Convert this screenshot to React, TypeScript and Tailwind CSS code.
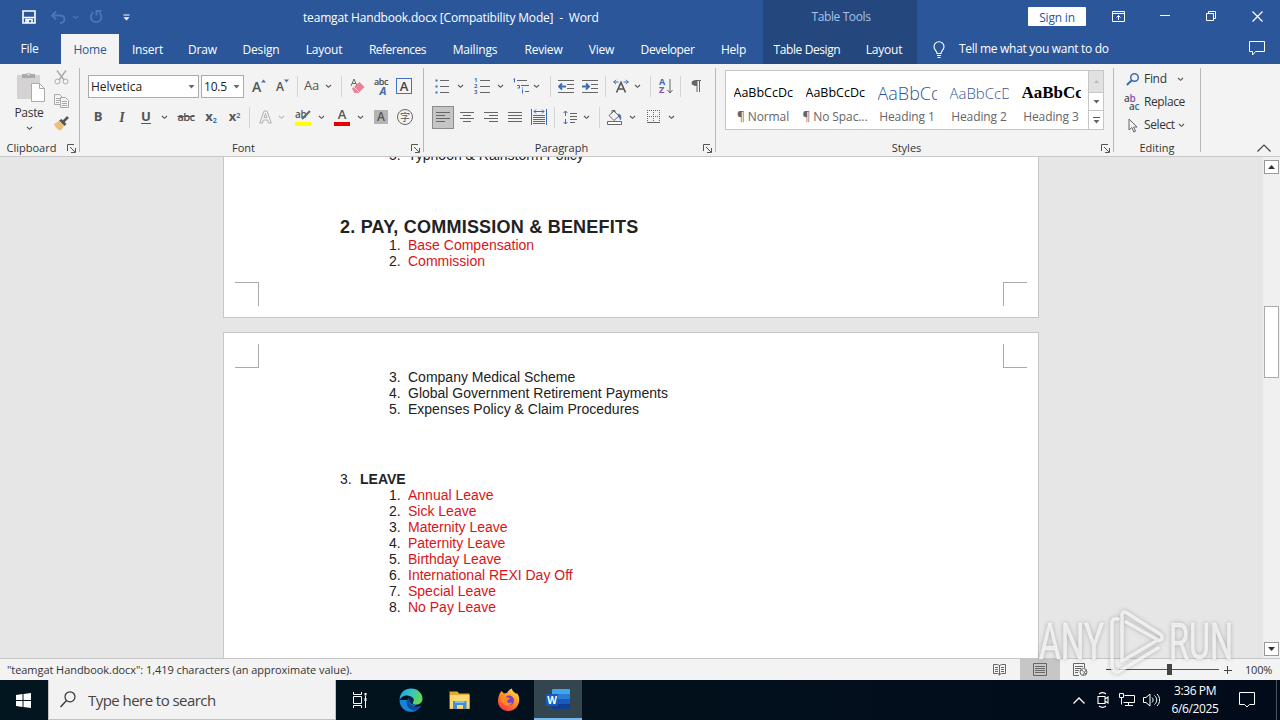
import React from "react";
import clsx from "clsx";

const Chevron = ({ className = "", color = "#555" }: { className?: string; color?: string }) => (
  <svg width="7" height="5" viewBox="0 0 7 5" className={clsx("shrink-0", className)}>
    <path d="M1 1l2.5 2.3L6 1" fill="none" stroke={color} strokeWidth="1.1" />
  </svg>
);

const Caret = ({ className = "" }: { className?: string }) => (
  <svg width="7" height="4" viewBox="0 0 7 4" className={clsx("shrink-0", className)}>
    <path d="M0.5 0h6L3.5 3.6z" fill="#666" />
  </svg>
);

const Sep = ({ className = "" }: { className?: string }) => (
  <div className={clsx("w-px h-[21px] shrink-0 bg-[#d4d4d4]", className)} />
);

const Launcher = () => (
  <svg width="9" height="9" viewBox="0 0 9 9" className="shrink-0" fill="none" stroke="#555">
    <path d="M0.5 7V0.5H7M3 3l5 5M8.5 4v4.5H4" />
  </svg>
);

type IconProps = { w: number; h: number; className?: string; children: React.ReactNode };

const Icon = ({ w, h, className = "", children }: IconProps) => (
  <svg
    width={w}
    height={h}
    viewBox={`0 0 ${w} ${h}`}
    className={clsx("shrink-0", className)}
    fill="none"
    stroke="#666"
  >
    {children}
  </svg>
);

const tabs = [
  { name: "File", cls: "w-[59px] pb-[2px]" },
  { name: "Home", cls: "w-[58px] ml-[2px] bg-[#f3f3f3] text-[#2b579a]" },
  { name: "Insert", cls: "w-[57px]" },
  { name: "Draw", cls: "w-[53px]" },
  { name: "Design", cls: "w-[64px]" },
  { name: "Layout", cls: "w-[62px]" },
  { name: "References", cls: "w-[85px] -tracking-[0.5px]" },
  { name: "Mailings", cls: "w-[70px]" },
  { name: "Review", cls: "w-[67px]" },
  { name: "View", cls: "w-[49px]" },
  { name: "Developer", cls: "w-[83px] -tracking-[0.4px]" },
  { name: "Help", cls: "w-[49px]" },
];

const Header = () => (
  <header className="flex h-[64px] bg-[#2b579a] text-white">
    <div className="w-[763px] flex flex-col">
      <div className="h-[34px] flex items-center">
        <Icon w={14} h={14} className="ml-[22px]">
          <path d="M1 1h12v12H1z" stroke="#fff" strokeWidth="1.6" />
          <path d="M1 7.5h12M4 13V9.500h6V13" stroke="#fff" strokeWidth="1.6" />
          <path d="M5 10h2v3H5z" fill="#fff" stroke="none" />
        </Icon>
        <Icon w={15} h={13} className="ml-[15px]">
          <path d="M5 0.500L1 4.500L5 8.500M1 4.500h8c6 0 6 7.500 0 7.500" stroke="#5075b2" strokeWidth="1.8" />
        </Icon>
        <Chevron className="ml-[6px]" color="#5075b2" />
        <Icon w={14} h={14} className="ml-[10px]">
          <path d="M4.500 2.200a5.300 5.300 0 1 0 6 0.500M7.500 5.500V1h5" stroke="#5075b2" strokeWidth="1.8" />
        </Icon>
        <Icon w={7} h={7} className="ml-[20px]">
          <path d="M0.500 1h6" stroke="#fff" />
          <path d="M0.500 3.200h6L3.500 6.500z" fill="#fff" stroke="none" />
        </Icon>
        <div className="ml-[173px] mt-[2px] text-[12px] whitespace-pre -tracking-[0.17px]">
          teamgat Handbook.docx [Compatibility Mode]  -  Word
        </div>
      </div>
      <nav className="h-[30px] flex">
        {tabs.map((t) => (
          <div key={t.name} className={clsx("flex items-center justify-center text-[12px] pt-[2px]", !t.cls.includes("tracking") && "-tracking-[0.2px]", t.cls)}>
            {t.name}
          </div>
        ))}
      </nav>
    </div>
    <div className="w-[154px] bg-[#24477d] flex flex-col">
      <div className="h-[34px] flex items-center justify-center text-[12px] text-[#a9c1e8] -tracking-[0.4px] pl-[2px]">
        Table Tools
      </div>
      <div className="h-[30px] flex items-center text-[12px] pt-[2px]">
        <span className="w-[89px] text-center whitespace-nowrap -tracking-[0.4px]">Table Design</span>
        <span className="w-[67px] text-center -tracking-[0.2px]">Layout</span>
      </div>
    </div>
    <div className="flex-1 flex flex-col">
      <div className="h-[32px] flex items-center">
        <div className="ml-[111px] w-[58px] h-[19px] pt-[2px] bg-white rounded-[1px] text-[#2b579a] text-[12px] leading-[17px] -tracking-[0.2px] flex items-center justify-center">
          Sign in
        </div>
        <Icon w={13} h={11} className="ml-[26px]">
          <path d="M0.500 0.500h12v10h-12zM0.500 2.500h12M6.500 9V4.500M4.500 6.500l2-2 2 2" stroke="#fff" />
        </Icon>
        <Icon w={10} h={2} className="ml-[35px]">
          <path d="M0 0.500h10" stroke="#fff" />
        </Icon>
        <Icon w={10} h={10} className="ml-[36px]">
          <path d="M0.500 2.500h7v7h-7zM2.500 2.500v-2h7v7h-2" stroke="#fff" />
        </Icon>
        <Icon w={11} h={11} className="ml-[36px]">
          <path d="M0.500 0.500l10 10M10.500 0.500l-10 10" stroke="#fff" strokeWidth="1.200" />
        </Icon>
      </div>
      <div className="h-[32px] flex items-center">
        <Icon w={12} h={17} className="ml-[16px] mt-[2px]">
          <path
            d="M4 12.500c0-3-3-3.500-3-6.800a5 5 0 0 1 10 0c0 3.300-3 3.800-3 6.800zM4 14.500h4M4.500 16.500h3"
            stroke="#fff"
            strokeWidth="1.100"
          />
        </Icon>
        <span className="ml-[14px] mt-[2px] text-[12px] w-[151px] whitespace-nowrap -tracking-[0.3px]">Tell me what you want to do</span>
        <Icon w={16} h={15} className="ml-[139px]">
          <path d="M0.500 0.500h15v10h-9l-3 3.500v-3.500h-3z" stroke="#fff" />
        </Icon>
      </div>
    </div>
  </header>
);

type GroupProps = { label: string; width: string; launcher?: boolean; children: React.ReactNode };

const Group = ({ label, width, launcher = true, children }: GroupProps) => (
  <section className={clsx("flex flex-col h-[84px] mt-[4px] border-r border-[#b8b8b8]", width)}>
    <div className="h-[72px] shrink-0">{children}</div>
    <div className="h-[16px] shrink-0 flex items-center pr-[3px]">
      <span className={clsx("flex-1 text-center text-[11px] leading-[14px] text-[#333]", launcher ? "pr-[4px]" : "pl-[3px]")}>{label}</span>
      {launcher && <Launcher />}
    </div>
  </section>
);

const Clipboard = () => (
  <Group label="Clipboard" width="w-[80px]">
    <div className="flex">
      <div className="w-[58px] flex flex-col items-center pt-[4px]">
        <Icon w={29} h={30} className="ml-[3px]">
          <path d="M1 3h23v24H1z" fill="#d5d2d4" stroke="none" />
          <path d="M6 2h4a3 2.500 0 0 1 5 0h4v4H6z" fill="#aaa" stroke="none" />
          <circle cx="12.500" cy="2.500" r="1" fill="#f3f3f3" stroke="none" />
          <path d="M15.500 11.500h8l5 5v13h-13z" fill="#fff" stroke="#aaa" />
          <path d="M23.500 11.500v5h5" stroke="#aaa" />
        </Icon>
        <span className="text-[12px] leading-[16px] mt-[3px] text-[#333] -tracking-[0.3px]">Paste</span>
        <Chevron className="mt-[5px]" />
      </div>
      <div className="flex flex-col items-center w-[6px] pt-[2px]">
        <Icon w={15} h={15}>
          <path d="M3 0.500l7 9.500M12 0.500L5 10" stroke="#aaa" strokeWidth="1.500" />
          <circle cx="3.500" cy="11.500" r="2.500" stroke="#aaa" />
          <circle cx="11.500" cy="11.500" r="2.500" stroke="#aaa" />
        </Icon>
        <Icon w={15} h={14} className="mt-[9px]">
          <path d="M0.500 0.500h5l3 3v7h-8zM2 4.500h4M2 6.500h4M2 8.500h3" stroke="#aaa" />
          <path d="M6.500 3.500h5l3 3v7h-8z" fill="#f3f3f3" stroke="#aaa" />
          <path d="M8 7.500h5M8 9.500h5M8 11.500h5" stroke="#aaa" />
        </Icon>
        <Icon w={16} h={15} className="mt-[8px]">
          <path d="M1 8l5-3 5 5-3 4.500c-3 0-6-3-7-6.500z" fill="#eabf78" stroke="none" />
          <path d="M6 4.500l2.500-1.500 5 5-2 2z" fill="#555" stroke="none" />
          <path d="M10.500 5.500L15 1" stroke="#555" strokeWidth="2.500" />
        </Icon>
      </div>
    </div>
  </Group>
);

const FontGroup = () => (
  <Group label="Font" width="w-[344px]">
    <div className="flex items-center h-[36px]">
      <div className="ml-[8px] w-[111px] h-[23px] border border-[#ababab] bg-white flex items-center justify-between pt-[1px] pl-[2px] pr-[3px] text-[12px] text-[#222]">
        Helvetica
        <Caret />
      </div>
      <div className="ml-[2px] w-[43px] h-[23px] border border-[#ababab] bg-white flex items-center justify-between pt-[1px] pl-[2px] pr-[3px] text-[12px] -tracking-[0.2px] text-[#222]">
        10.5
        <Caret />
      </div>
      <span className="ml-[8px] w-[9px] text-[14px] font-semibold text-[#555]">A</span>
      <Icon w={5} h={4} className="-mt-[11px]">
        <path d="M0 3.500L2.500 0.500 5 3.500z" fill="#4472b8" stroke="none" />
      </Icon>
      <span className="ml-[10px] w-[8px] text-[12px] font-semibold text-[#555] pt-[2px]">A</span>
      <Icon w={5} h={4} className="-mt-[11px]">
        <path d="M0 0.500h5L2.500 3.500z" fill="#4472b8" stroke="none" />
      </Icon>
      <Sep className="ml-[8px]" />
      <span className="ml-[6px] w-[20px] text-[13px] text-[#555] tracking-[-0.3px]">Aa</span>
      <Chevron className="ml-[1px]" />
      <Sep className="ml-[9px]" />
      <Icon w={16} h={16} className="ml-[8px]">
        <path d="M1 8l3-7 3 7M2 5.500h4" stroke="#5f6f68" />
        <path d="M2 10.500l7.500-6.500 5 5-6 6h-4z" fill="#ea7f98" stroke="none" />
        <path d="M4 9l5 5" stroke="#fbe3e8" />
      </Icon>
      <div className="ml-[7px] w-[16px] flex flex-col items-center leading-none">
        <span className="text-[9px] leading-[8px] tracking-[-0.4px] font-semibold text-[#444]">abc</span>
        <span className="text-[11px] leading-[9px] italic font-bold text-[#3b6cb0] pl-[4px]">A</span>
      </div>
      <div className="ml-[7px] w-[16px] h-[16px] border border-[#4472b8] flex items-center justify-center text-[13px] leading-[14px] font-semibold text-[#444]">
        A
      </div>
    </div>
    <div className="flex items-center h-[26px] text-[#555]">
      <b className="ml-[6px] w-[24px] text-center text-[13px]">B</b>
      <i className="w-[24px] text-center text-[14px] font-['Liberation_Serif'] font-bold">I</i>
      <b className="w-[24px] text-center text-[13px] underline underline-offset-2">U</b>
      <Chevron className="ml-[3px]" />
      <span className="ml-[5px] w-[26px] text-center text-[11px] font-semibold line-through tracking-[-0.5px]">abc</span>
      <span className="w-[24px] text-center text-[13px] font-bold">
        x<sub className="text-[7px] text-[#3b6cb0]">2</sub>
      </span>
      <span className="w-[23px] text-center text-[13px] font-bold">
        x<sup className="text-[7px] text-[#3b6cb0]">2</sup>
      </span>
      <Sep className="ml-[3px]" />
      <Icon w={13} h={14} className="ml-[9px]">
        <path d="M0.700 13L5 1h3l4.300 12H9.500L8.700 10H4.300L3.500 13zM5 7.500h3L6.500 3.500z" stroke="#b0b0b0" />
      </Icon>
      <Chevron className="ml-[6px]" color="#bbb" />
      <div className="ml-[10px] w-[16px] h-[18px] relative flex flex-col justify-between">
        <span className="text-[10px] leading-[12px] font-semibold tracking-[-0.4px]">ab</span>
        <Icon w={10} h={11} className="absolute left-[6px] top-[1px]">
          <path d="M1 10L9 2" stroke="#666" strokeWidth="2" />
        </Icon>
        <div className="h-[4px] bg-[#ffff00]" />
      </div>
      <Chevron className="ml-[7px]" />
      <div className="ml-[9px] w-[16px] h-[18px] flex flex-col items-center justify-between">
        <span className="text-[13px] leading-[13px] font-semibold">A</span>
        <div className="h-[4px] w-full bg-[#e60000]" />
      </div>
      <Chevron className="ml-[7px]" />
      <div className="ml-[10px] w-[14px] h-[14px] bg-[#b4b4b4] flex items-center justify-center text-[12px] leading-[14px] font-semibold">A</div>
      <div className="ml-[9px] w-[16px] h-[16px] rounded-full border border-[#666] flex items-center justify-center text-[10px] leading-none font-['Noto_Sans_CJK_SC',sans-serif]">
        字
      </div>
    </div>
  </Group>
);

const ParagraphGroup = () => (
  <Group label="Paragraph" width="w-[292px]">
    <div className="flex items-center h-[36px]">
      <Icon w={15} h={15} className="ml-[11px]">
        <path d="M5 1.500h9M5 7.500h9M5 13.500h9" />
        <path d="M0.500 0.500h2v2h-2zM0.500 6.500h2v2h-2zM0.500 12.500h2v2h-2z" fill="#3b6cb0" stroke="none" />
      </Icon>
      <Chevron className="ml-[7px]" />
      <div className="ml-[10px] flex items-center">
        <div className="w-[5px] flex flex-col text-[6px] leading-[6px] font-bold text-[#3b6cb0]">
          <span>1</span>
          <span>2</span>
          <span>3</span>
        </div>
        <Icon w={11} h={15}>
          <path d="M1 1.500h10M1 7.500h10M1 13.500h10" />
        </Icon>
      </div>
      <Chevron className="ml-[7px]" />
      <Icon w={16} h={16} className="ml-[9px]">
        <path d="M4 2.500h10M8 7.500h8M12 13.500h4" />
        <path d="M0.500 1.500l1-1v4M4 7.500h2.500v2.500H4.500M9.500 11.500v4M9.500 9.500v1" stroke="#3b6cb0" />
      </Icon>
      <Chevron className="ml-[4px]" />
      <Sep className="ml-[10px]" />
      <Icon w={16} h={13} className="ml-[7px]">
        <path d="M0 0.500h16M9 4.500h7M9 8.500h7M0 12.500h16" />
        <path d="M1 6.500h7M4 3.500l-3 3 3 3" stroke="#3b6cb0" strokeWidth="1.800" />
      </Icon>
      <Icon w={16} h={13} className="ml-[8px]">
        <path d="M0 0.500h16M9 4.500h7M9 8.500h7M0 12.500h16" />
        <path d="M0 6.500h7M4 3.500l3 3-3 3" stroke="#3b6cb0" strokeWidth="1.800" />
      </Icon>
      <Sep className="ml-[7px]" />
      <Icon w={16} h={14} className="ml-[7px]">
        <path d="M3.500 13.500L8 3.500l4.500 10M5 10h6" strokeWidth="1.600" stroke="#555" />
        <path d="M0.500 3h5M3 0.800L0.800 3 3 5.200M10.500 3h5M13 0.800L15.200 3 13 5.200" stroke="#3b6cb0" />
      </Icon>
      <Chevron className="ml-[5px]" />
      <Sep className="ml-[9px]" />
      <div className="ml-[8px] w-[8px] flex flex-col text-[9px] leading-[8px] font-bold">
        <span className="text-[#3b6cb0]">A</span>
        <span className="text-[#8a4fb0]">Z</span>
      </div>
      <Icon w={6} h={15}>
        <path d="M3 0v14M0.500 11l2.500 3 2.500-3" />
      </Icon>
      <Sep className="ml-[7px]" />
      <Icon w={10} h={12} className="ml-[10px]">
        <path d="M5 0h5v1H9v11H8V1H6.500v11h-1V6C-1 6-1 0 5 0z" fill="#666" stroke="none" />
      </Icon>
    </div>
    <div className="flex items-center h-[26px]">
      <div className="ml-[8px] w-[22px] h-[23px] border border-[#8c8c8c] bg-[#c5c5c5] flex items-center justify-center">
        <Icon w={14} h={11}>
          <path d="M0 0.500h14M0 3.500h9M0 6.500h14M0 9.500h9" />
        </Icon>
      </div>
      <Icon w={14} h={11} className="ml-[6px]">
        <path d="M0 0.500h14M3 3.500h8M0 6.500h14M3 9.500h8" />
      </Icon>
      <Icon w={14} h={11} className="ml-[10px]">
        <path d="M0 0.500h14M5 3.500h9M0 6.500h14M5 9.500h9" />
      </Icon>
      <Icon w={14} h={11} className="ml-[10px]">
        <path d="M0 0.500h14M0 3.500h14M0 6.500h14M0 9.500h14" />
      </Icon>
      <Icon w={16} h={16} className="ml-[9px]">
        <path d="M0.500 0v16M15.500 0v16" stroke="#3b6cb0" />
        <path d="M2 6.500h12M2 8.500h12M2 10.500h12M2 12.500h12M2 14.500h12" />
        <path d="M3 2.500h10M5 0.500l-2 2 2 2M11 0.500l2 2-2 2" stroke="#3b6cb0" />
      </Icon>
      <Sep className="ml-[7px]" />
      <Icon w={14} h={15} className="ml-[8px]">
        <path d="M7 3.500h7M7 6.500h7M7 9.500h7M7 12.500h5" />
        <path d="M2.500 1v5M0.500 3l2-2 2 2M2.500 9v5M0.500 12l2 2 2-2" stroke="#3b6cb0" />
      </Icon>
      <Chevron className="ml-[6px]" />
      <Sep className="ml-[9px]" />
      <Icon w={17} h={16} className="ml-[6px]">
        <path d="M3 6.500l5-4.500 5 5-5 4.500zM6 4V1.500h3v2" />
        <path d="M12 5c3 0 3.500 3 2.500 6-1-1-1-3-2-4z" fill="#3b6cb0" stroke="#3b6cb0" strokeWidth="0.500" />
        <path d="M1.500 12.500h14v3h-14z" fill="#fff" />
      </Icon>
      <Chevron className="ml-[6px]" />
      <Icon w={14} h={14} className="ml-[11px]">
        <path d="M0.500 0v13M12.500 0v13M6.500 0v13M0 0.500h13M0 6.500h13" strokeDasharray="1 1" />
        <path d="M0 12.500h13" />
      </Icon>
      <Chevron className="ml-[7px]" />
    </div>
  </Group>
);

const styles = [
  { name: "¶ Normal", cls: "text-[12.500px] text-black", text: "AaBbCcDc" },
  { name: "¶ No Spac...", cls: "text-[12.500px] text-black", text: "AaBbCcDc" },
  { name: "Heading 1", cls: "text-[18px] text-[#2f5496] font-light", text: "AaBbCc" },
  { name: "Heading 2", cls: "text-[15px] text-[#2f5496] font-light", text: "AaBbCcD" },
  { name: "Heading 3", cls: "text-[17px] text-black font-bold font-['Liberation_Serif']", text: "AaBbCc" },
];

const StylesGroup = () => (
  <Group label="Styles" width="w-[398px]">
    <div className="ml-[9px] mt-[2px] w-[379px] h-[60px] border border-[#c6c6c6] bg-white flex">
      {styles.map((s, i) => (
        <div key={i} className="w-[72px] shrink-0 flex flex-col items-center">
          <div className={clsx("ml-[2px] w-[59px] h-[24px] mt-[10px] overflow-hidden flex items-center whitespace-nowrap", s.cls)}>
            {s.text}
          </div>
          <div className="text-[12px] leading-[16px] mt-[4px] ml-[2px] text-[#666] whitespace-nowrap -tracking-[0.1px]">
            {s.name}
          </div>
        </div>
      ))}
      <div className="ml-auto w-[15px] border-l border-[#c6c6c6] flex flex-col">
        <div className="h-[21px] bg-[#e1e1e1] flex items-center justify-center">
          <svg width="5" height="3" viewBox="0 0 5 3">
            <path d="M0 3L2.500 0 5 3z" fill="#bbb" />
          </svg>
        </div>
        <div className="h-[19px] border-y border-[#c6c6c6] flex items-center justify-center">
          <Caret />
        </div>
        <div className="flex-1 flex flex-col items-center justify-center gap-[2px]">
          <div className="w-[7px] h-px bg-[#555]" />
          <Caret />
        </div>
      </div>
    </div>
  </Group>
);

const EditingGroup = () => (
  <Group label="Editing" width="w-[87px]" launcher={false}>
    <div className="flex flex-col text-[12px] text-[#333] pl-[10px]">
      <div className="h-[22px] flex items-center">
        <Icon w={14} h={13} className="ml-[2px]">
          <circle cx="8.500" cy="4.500" r="3.800" stroke="#3b6cb0" strokeWidth="1.500" />
          <path d="M5.500 7.500L0.800 12" stroke="#3b6cb0" strokeWidth="2" />
        </Icon>
        <span className="ml-[4px] w-[33px] -tracking-[0.3px]">Find</span>
        <Chevron />
      </div>
      <div className="h-[24px] flex items-center">
        <div className="w-[18px] flex flex-col text-[10px] leading-[8px] tracking-[-0.4px] font-semibold text-[#555]">
          <span>
            a<span className="text-[#8a4fb0]">b</span>
          </span>
          <span className="pl-[5px]">
            a<span className="text-[#3b6cb0]">c</span>
          </span>
        </div>
        <span className="ml-[2px] -tracking-[0.4px]">Replace</span>
      </div>
      <div className="h-[22px] flex items-center">
        <Icon w={10} h={15} className="ml-[4px]">
          <path d="M1 1v11l2.800-2.500L5.800 14l1.800-0.800-2-4.200h3.500z" />
        </Icon>
        <span className="ml-[6px] w-[34px] -tracking-[0.4px]">Select</span>
        <Chevron />
      </div>
    </div>
  </Group>
);

const Ribbon = () => (
  <div className="h-[93px] bg-[#f3f3f3] border-b border-[#c8c8c8] flex">
    <Clipboard />
    <FontGroup />
    <ParagraphGroup />
    <StylesGroup />
    <EditingGroup />
    <Icon w={14} h={8} className="ml-auto mr-[9px] mt-[80px]">
      <path d="M0.500 7.500L7 1l6.500 6.500" stroke="#444" strokeWidth="1.200" />
    </Icon>
  </div>
);

const Line = ({ n, red = false, children }: { n: number; red?: boolean; children: React.ReactNode }) => (
  <div className="flex h-[16.100px] items-center text-[14px]">
    <span className="ml-[165px] w-[19px] shrink-0">{n}.</span>
    <span className={clsx("whitespace-nowrap", red && "text-[#d91420]")}>{children}</span>
  </div>
);

const leave = [
  "Annual Leave",
  "Sick Leave",
  "Maternity Leave",
  "Paternity Leave",
  "Birthday Leave",
  "International REXI Day Off",
  "Special Leave",
  "No Pay Leave",
];

const Document = () => (
  <main className="h-[501px] bg-[#e6e6e6] flex overflow-hidden">
    <div className="ml-[223px] w-[816px] flex flex-col font-['Liberation_Sans'] text-[#222]">
      <div className="h-[161px] shrink-0 bg-white border border-t-0 border-[#c6c6c6] flex flex-col">
        <div className="-mt-[10px]">
          <Line n={5}>Typhoon &amp; Rainstorm Policy</Line>
        </div>
        <div className="mt-[54px] h-[20px] flex items-center ml-[116px] text-[18px] font-bold whitespace-nowrap tracking-[0.220px]">
          2. PAY, COMMISSION &amp; BENEFITS
        </div>
        <Line n={1} red>Base Compensation</Line>
        <Line n={2} red>Commission</Line>
        <div className="mt-[13px] flex justify-between px-[11px]">
          <div className="w-[24px] h-[24px] border-t border-r border-[#aaa]" />
          <div className="w-[24px] h-[24px] border-t border-l border-[#aaa]" />
        </div>
      </div>
      <div className="mt-[14px] h-[400px] shrink-0 bg-white border border-[#c6c6c6] flex flex-col">
        <div className="mt-[11px] flex justify-between px-[11px]">
          <div className="w-[24px] h-[24px] border-b border-r border-[#aaa]" />
          <div className="w-[24px] h-[24px] border-b border-l border-[#aaa]" />
        </div>
        <div className="mt-[1px]">
          <Line n={3}>Company Medical Scheme</Line>
          <Line n={4}>Global Government Retirement Payments</Line>
          <Line n={5}>Expenses Policy &amp; Claim Procedures</Line>
        </div>
        <div className="mt-[54px] h-[16px] flex items-center text-[14px]">
          <span className="ml-[116px] w-[20px]">3.</span>
          <b>LEAVE</b>
        </div>
        {leave.map((l, i) => (
          <Line key={l} n={i + 1} red>{l}</Line>
        ))}
      </div>
    </div>
    <div className="ml-auto w-[17px] bg-[#f0f0f0] flex flex-col items-center pt-[3px] pb-[2px]">
      <div className="w-[15px] h-[14px] border border-[#999] bg-white flex items-center justify-center">
        <svg width="7" height="4" viewBox="0 0 7 4">
          <path d="M0 4L3.500 0 7 4z" fill="#333" />
        </svg>
      </div>
      <div className="mt-[132px] w-[15px] h-[72px] border border-[#ababab] bg-white" />
      <div className="mt-auto w-[15px] h-[14px] border border-[#999] bg-white flex items-center justify-center">
        <svg width="7" height="4" viewBox="0 0 7 4">
          <path d="M0 0h7L3.500 4z" fill="#333" />
        </svg>
      </div>
    </div>
  </main>
);

const StatusBar = () => (
  <div className="h-[22px] bg-[#f3f3f3] border-t border-[#c6c6c6] flex items-center text-[11px] text-[#333]">
    <span className="ml-[7px] mt-[2px] w-[986px] whitespace-nowrap -tracking-[0.06px]">
      "teamgat Handbook.docx": 1,419 characters (an approximate value).
    </span>
    <Icon w={13} h={13}>
      <path d="M0.500 1.500h4l2 1 2-1h4v9h-4l-2 1-2-1h-4zM6.500 2v10.500M2 4.500h3M2 6.500h3M2 8.500h3M8 4.500h3M8 6.500h3M8 8.500h3" />
    </Icon>
    <div className="ml-[14px] w-[40px] h-full bg-[#c6c6c6] flex items-center justify-center">
      <Icon w={14} h={13}>
        <path d="M0.500 0.500h13v12h-13zM2 3.500h10M2 5.500h10M2 7.500h10M2 9.500h10" />
      </Icon>
    </div>
    <Icon w={15} h={13} className="ml-[13px]">
      <path d="M6 12.500H0.500v-12h11V5M2 3.500h8M2 5.500h6M2 7.500h4M2 9.500h3" />
      <circle cx="10.500" cy="9" r="3.500" />
      <path d="M8 7c2 0 2 2 5 4M10 12l3-5" />
    </Icon>
    <div className="ml-[18px] w-[7px] h-px bg-[#444]" />
    <div className="ml-[6px] w-[100px] flex items-center">
      <div className="w-[48px] h-px bg-[#555]" />
      <div className="w-[5px] h-[11px] bg-[#444]" />
      <div className="w-[47px] h-px bg-[#555]" />
    </div>
    <Icon w={8} h={8} className="ml-[5px]">
      <path d="M0 4.500h8M3.500 0v8" stroke="#444" />
    </Icon>
    <span className="ml-[13px] -tracking-[0.2px] leading-[14px]">100%</span>
  </div>
);

const Taskbar = () => (
  <footer className="h-[40px] flex items-center bg-linear-to-r from-[#02161f] to-[#020b1a] text-white">
    <div className="w-[48px] flex justify-center pr-[6px]">
      <svg width="15" height="15" viewBox="0 0 15 15" className="ml-[5px]">
        <path d="M0 2l6.500-1v6H0zM7.500 1L15 0v7H7.500zM0 8h6.500v6L0 13zM7.500 8H15v7l-7.500-1z" fill="#fff" />
      </svg>
    </div>
    <div className="w-[288px] h-[40px] bg-[#f2f2f2] border border-t-0 border-[#c2c2c2] flex items-center">
      <Icon w={16} h={17} className="ml-[11px]">
        <circle cx="10" cy="5.800" r="5" stroke="#333" strokeWidth="1.200" />
        <path d="M6.500 9.500L0.500 16" stroke="#333" strokeWidth="1.300" />
      </Icon>
      <span className="ml-[12px] mt-[2px] text-[15px] text-[#444] whitespace-nowrap -tracking-[0.550px]">Type here to search</span>
    </div>
    <Icon w={16} h={16} className="ml-[16px]">
      <path d="M1.500 4.500h8v7h-8zM1.500 0v2.500h8V0M1.500 16v-2.500h8V16M13.500 4v12" stroke="#fff" />
      <path d="M12.500 1h2v2.500h-2zM12.500 6h2v3h-2z" fill="#fff" stroke="none" />
    </Icon>
    <svg width="24" height="24" viewBox="0 0 24 24" className="ml-[31px]">
      <defs>
        <linearGradient id="edgeTop" x1="0" x2="1" y1="0" y2="0.400">
          <stop offset="0" stopColor="#1b9de2" />
          <stop offset="0.500" stopColor="#35c1c9" />
          <stop offset="1" stopColor="#62d756" />
        </linearGradient>
      </defs>
      <path d="M0.500 12a11.500 11.500 0 0 0 21.500 6c-2 1-5 1.500-7 0.500L23 12z" fill="#1684d8" />
      <path d="M0.500 12C1 4 6 0.500 12 0.500c7 0 11.500 5 11.500 10 0 4-3 6-6 6-3 0-4.500-1-3-3C16 9 9 6.500 5 8c-3 1-4.500 4-4.500 4z" fill="url(#edgeTop)" />
      <path d="M10 9.500c-5 4-2 12 5 13 3-0.500 5.500-2 7.500-5-8 3.500-13.500-2-12.500-8z" fill="#114a9b" />
      <path d="M10.500 9.500c2-1 5 1 4 3.500-1.500 2-0.500 3.500 2 3.500-3 1-7.500-2-6-7z" fill="#0a2744" />
    </svg>
    <svg width="22" height="20" viewBox="0 0 22 20" className="ml-[26px]">
      <path d="M0.500 1.500h8l1.500 2h10.500v15.500h-20z" fill="#e8a92e" />
      <path d="M1 5h19.500v13.500H1z" fill="#fbd972" />
      <path d="M4 19v-8h13.500v8H14v-4H8v4z" fill="#3f8fd2" />
      <path d="M6 11h9.500v2H6z" fill="#7cc0ee" />
    </svg>
    <svg width="24" height="24" viewBox="0 0 24 24" className="ml-[26px]">
      <defs>
        <linearGradient id="fox" x1="0.800" x2="0.200" y1="0" y2="1">
          <stop offset="0" stopColor="#ffe04a" />
          <stop offset="0.500" stopColor="#ff8a22" />
          <stop offset="1" stopColor="#f4304f" />
        </linearGradient>
      </defs>
      <path d="M3 5l1.500-2L7 5.500l3-0.500c1-2 3-4 5-4.500 0 3 3 3.500 4 5.500l1-1c2 3 2.500 5 2 9-1 5-5 9-10.500 9C5 23 1 18.500 1 13c0-3 1-6 2-8z" fill="url(#fox)" />
      <circle cx="12" cy="12.500" r="5" fill="#7b3fd0" />
      <path d="M4 8c3-1 5-0.500 6 1.500l3 0.500c-1 2-3 2-3 3.500 0 1 2 2 5 1-1 3-5 4-8 2-2-1.500-3.500-5-3-8.500z" fill="#ff8a22" />
    </svg>
    <div className="ml-[13px] w-[48px] h-[40px] bg-[#33464f] border-b-2 border-[#76b9ed] flex items-center justify-center">
      <div className="relative w-[24px] h-[20px]">
        <div className="ml-[6px] w-[18px] h-[20px] flex flex-col rounded-[1px] overflow-hidden">
          <div className="flex-1 bg-[#41a5ee]" />
          <div className="flex-1 bg-[#2b7cd3]" />
          <div className="flex-1 bg-[#185abd]" />
          <div className="flex-1 bg-[#103f91]" />
        </div>
        <div className="absolute left-0 top-[5px] w-[12px] h-[12px] bg-[#185abd] flex items-center justify-center text-[10px] leading-none font-bold">
          W
        </div>
      </div>
    </div>
    <Icon w={12} h={7} className="ml-auto">
      <path d="M0.500 6.500L6 1l5.500 5.500" stroke="#fff" strokeWidth="1.300" />
    </Icon>
    <Icon w={12} h={16} className="ml-[12px]">
      <path d="M1 4.500h7v7H1zM8 7l3-2v6L8 9M2 2c2-1.500 5-1.500 7 0M2 14c2 1.500 5 1.500 7 0" stroke="#fff" strokeWidth="1.100" />
    </Icon>
    <Icon w={16} h={14} className="ml-[10px]">
      <path d="M5.500 2.500h10v7h-11M0.500 0.500h4v4h-4zM2.500 4.500v7M9.500 9.500v3M6 12.500h8" stroke="#fff" />
    </Icon>
    <Icon w={17} h={14} className="ml-[8px]">
      <path d="M0.500 4.500H3l4-3.500v12L3 9.500H0.500zM9 4.500c1.500 1.500 1.500 3.500 0 5M11.500 2.500c3 2.500 3 6.500 0 9M14 1c3.500 3.500 3.500 8.500 0 12" stroke="#fff" />
    </Icon>
    <div className="w-[70px] flex flex-col items-center text-[12px] leading-[18px] -tracking-[0.400px]">
      <span>3:36 PM</span>
      <span>6/6/2025</span>
    </div>
    <Icon w={16} h={16} className="ml-[9px]">
      <path d="M0.500 0.500h15v12h-5L8 15l-2.500-2.500h-5z" stroke="#fff" />
    </Icon>
    <div className="ml-[21px] mr-[3px] w-px h-[40px] bg-[#4a5560]" />
  </footer>
);

const Watermark = () => (
  <svg width="200" height="74" viewBox="0 0 200 74" className="absolute left-[1036px] top-[606px] drop-shadow-[0_0_2px_rgba(0,0,0,0.350)]">
    <g fill="#fff" fillOpacity="0.700" stroke="#fff" strokeOpacity="0.500" strokeWidth="0.600" fontFamily="Roboto, sans-serif" fontSize="50" fontWeight="400">
      <text x="3" y="53" textLength="65" lengthAdjust="spacingAndGlyphs">ANY</text>
      <text x="133" y="53" textLength="64" lengthAdjust="spacingAndGlyphs">RUN</text>
    </g>
    <g fill="none" stroke="#fff" strokeOpacity="0.700" strokeWidth="3.500" strokeLinejoin="round" strokeLinecap="round">
      <path d="M76 59V17c0-3 2-5 6-4M76 59c0 6 4 9 8 6l38-23" />
      <path d="M86 54V9c0-3 2-4 5-2l33 21c4 3 2 7-2 6L90 16M86 55l34-20" />
    </g>
  </svg>
);

const App = () => {
  return (
    <div className="relative w-[1280px] h-[720px] overflow-hidden font-['Open_Sans',sans-serif]">
      <Header />
      <Ribbon />
      <Document />
      <StatusBar />
      <Taskbar />
      <Watermark />
    </div>
  );
};

export default App;
